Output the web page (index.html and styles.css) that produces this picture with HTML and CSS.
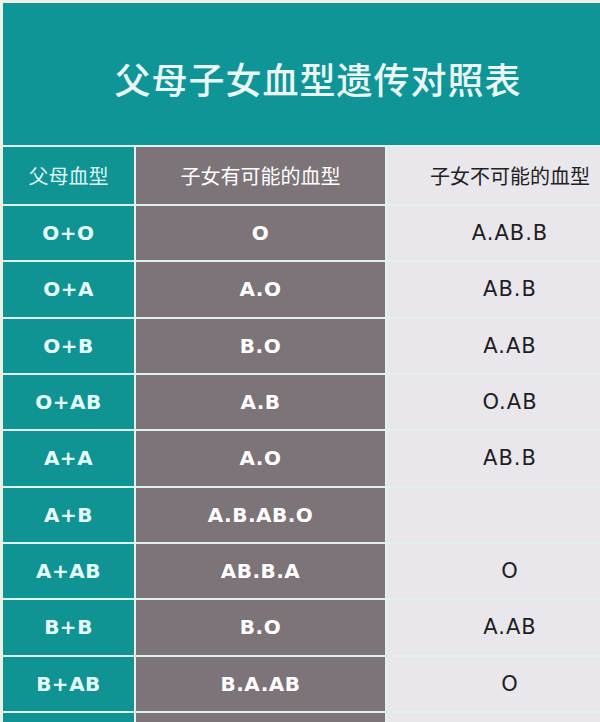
FILE: index.html
```html
<!DOCTYPE html>
<html lang="zh-CN">
<head>
<meta charset="utf-8">
<title>父母子女血型遗传对照表</title>
<link rel="stylesheet" href="styles.css">
</head>
<body>
<div class="page">
  <header class="banner">
    <h1 class="title">父母子女血型遗传对照表</h1>
  </header>
  <div class="table">
    <div class="cell c1 head">父母血型</div>
    <div class="cell c2 head">子女有可能的血型</div>
    <div class="cell c3 head">子女不可能的血型</div>

    <div class="cell c1">O+O</div><div class="cell c2">O</div><div class="cell c3">A.AB.B</div>
    <div class="cell c1">O+A</div><div class="cell c2">A.O</div><div class="cell c3">AB.B</div>
    <div class="cell c1">O+B</div><div class="cell c2">B.O</div><div class="cell c3">A.AB</div>
    <div class="cell c1">O+AB</div><div class="cell c2">A.B</div><div class="cell c3">O.AB</div>
    <div class="cell c1">A+A</div><div class="cell c2">A.O</div><div class="cell c3">AB.B</div>
    <div class="cell c1">A+B</div><div class="cell c2">A.B.AB.O</div><div class="cell c3"></div>
    <div class="cell c1">A+AB</div><div class="cell c2">AB.B.A</div><div class="cell c3">O</div>
    <div class="cell c1">B+B</div><div class="cell c2">B.O</div><div class="cell c3">A.AB</div>
    <div class="cell c1">B+AB</div><div class="cell c2">B.A.AB</div><div class="cell c3">O</div>
    <div class="cell c1"></div><div class="cell c2"></div><div class="cell c3"></div>
  </div>
</div>
</body>
</html>
```

FILE: styles.css
```css
html, body {
  margin: 0;
  padding: 0;
  background: #f1efe4;
  overflow: hidden;
}
.page {
  width: 600px;
  height: 722px;
  overflow: hidden;
  padding: 3px 0 0 3px;
  box-sizing: border-box;
  background: #f1efe4;
}
.banner {
  height: 142px;
  width: 640px;
  background: #0f9598;
  display: flex;
  align-items: center;
  justify-content: center;
  box-sizing: border-box;
  padding: 8px 0 0 0;
}
.title {
  margin: 0 0 0 -10px;
  font-family: "Noto Sans CJK SC", sans-serif;
  font-weight: 500;
  font-size: 36px;
  letter-spacing: 1px;
  color: #eaf7f5;
  line-height: 1;
}
.table {
  display: grid;
  grid-template-columns: 131px 249px 246px;
  grid-template-rows: 57px repeat(10, 54.33px);
  gap: 2px;
  padding-top: 2px;
  background: #e2f1ee;
  width: 630px;
}
.cell {
  display: flex;
  align-items: center;
  justify-content: center;
  font-family: "DejaVu Sans", sans-serif;
  font-size: 20px;
  letter-spacing: 0.5px;
}
.c1 {
  background: #0f9393;
  color: #e4fbf9;
  font-weight: bold;
}
.c2 {
  background: #7c7479;
  color: #ffffff;
  font-weight: bold;
}
.c3 {
  background: #e9e7ec;
  color: #1f1f1f;
  font-size: 21px;
  letter-spacing: 1px;
}
.head {
  font-family: "Noto Sans CJK SC", sans-serif;
  font-weight: 400;
  font-size: 20px;
  letter-spacing: 0;
}
.c1.head { color: #dff8f6; }
.c2.head { color: #ffffff; }
.c3.head { color: #222222; }
```
